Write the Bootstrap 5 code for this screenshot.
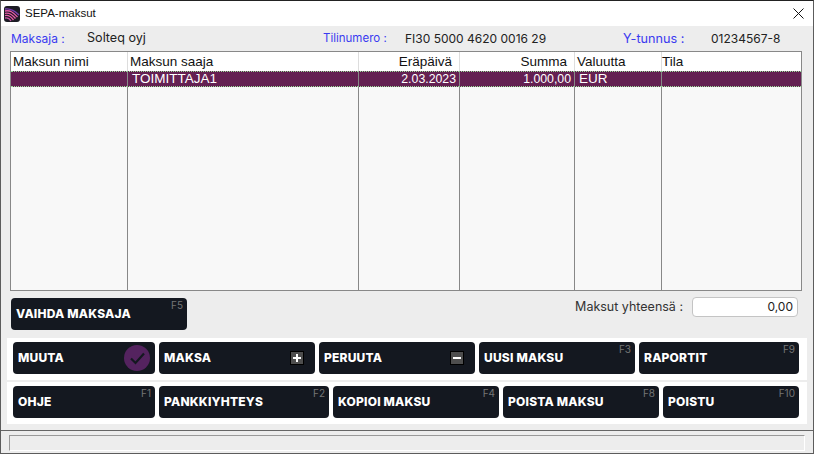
<!DOCTYPE html>
<html lang="fi"><head><meta charset="utf-8"><title>SEPA-maksut</title>
<link href="https://cdn.jsdelivr.net/npm/bootstrap@5.3.0/dist/css/bootstrap.min.css" rel="stylesheet">
<style>
html,body{margin:0;height:454px;overflow:hidden;background:#ededed}
body{font-family:Inter,"Open Sans",sans-serif;font-size:12px;color:#222}
.win{width:814px;height:454px;border:1px solid #5c5c5c;border-top-color:#222;background:#ededed}
.titlebar{height:25px;background:#fff;padding-left:3px;gap:5px;color:#111;font-family:"Liberation Sans",sans-serif}
.titlebar .ttl{font-size:11.500px}
.closex{margin-left:auto;margin-right:9px;line-height:0}
.infoline{height:25px;padding:0 0 0 10px;white-space:nowrap}
.lbl{color:#3b3bf0}
.val{color:#222}
.c1{width:76px}.c2{width:236px;font-size:12.600px}.c3{width:82px;font-size:11.500px}.c4{width:218px}.c5{width:88px;font-size:12.700px}
.grid{margin:0 11px 0 9px;height:240px;border:1px solid #888;background:#f8f8f8;font-family:"Liberation Sans",sans-serif;font-size:13.500px;display:grid;grid-template-columns:116px 231px 101px 115px 87px 1fr;grid-template-rows:19px 16px 1fr}
.hc{background:#fff;border-left:1px solid #ddd;padding:0 2px;line-height:19px;color:#111;white-space:nowrap}
.hc.first{border-left:0}
.hc.ta{padding-right:7px}
.hc.lastc{padding:0}
.rc{background:#642052;color:#fff;border-left:1px solid #888;padding:0 3px 0 4px;border-top:1px dotted #9adf9a;border-bottom:1px dotted #9adf9a;white-space:nowrap;line-height:14px}
.rc.first{border-left:0}
.rc.nums{font-size:12.300px}
.bc{border-left:1px solid #888}
.bc.first{border-left:0}
.ta{text-align:right}
.sumline{height:47px;padding:6px 15px 0 10px}
.fbtn{position:relative;flex:none;background:#141820;color:#fff;border-radius:4px;height:32px;display:flex;align-items:center;padding:0 5px;font-family:Inter,"Open Sans",sans-serif;font-weight:800;font-size:12px;letter-spacing:.2px;white-space:nowrap}
.fkey{position:absolute;right:4px;top:1px;color:#757575;font-weight:400;font-size:10px;letter-spacing:0;line-height:13px}
.strip{background:#fff;margin:0 6px;height:42px;padding:4px 6px;gap:4px}
.strip+.strip{margin-top:2px}
.vbtn{width:176px;margin-top:1px}
.w136{width:136px}.w142{width:142px}.w156{width:156px}.w160{width:160px}.w166{width:166px}.w170{width:170px}
.totbox{width:106px;height:20px;border:1px solid #c4c4c4;border-radius:4px;background:#fff;text-align:right;padding-right:4px;line-height:18px;margin-left:9px;color:#222;font-size:12px}
.sumtxt{color:#333;font-size:12.500px}
.statuswrap{margin-top:6px;border-top:1px solid #666;padding:4px 8px 0 8px}
.statusin{height:16px;border:1px solid #999;border-right-color:#fff;border-bottom-color:#fff}
.chk{position:absolute;right:5px;top:3px}
.pm{position:absolute;right:11px;top:9px;width:14px;height:14px;background:#4e4e4e;border:1px solid #000;display:flex;align-items:center;justify-content:center}
</style></head><body>
<div class="win d-flex flex-column">
 <div class="titlebar d-flex align-items-center">
  <svg width="16" height="16" viewBox="0 0 16 16"><rect width="16" height="16" rx="3" fill="#1c1c24"/><g fill="none" stroke-width="1.300"><path d="M1 3C6 2 10 4 15 9" stroke="#7a3fb0"/><path d="M1 5C6 4 9 6 13.500 11" stroke="#e85aa8"/><path d="M1 7.300C5 6.500 8 8 11.500 12.500" stroke="#e85aa8"/><path d="M1 9.600C4 9 7 10.500 9.500 14" stroke="#e85aa8"/><path d="M1 12C3.500 11.500 5.500 12.500 7 15" stroke="#c850a0"/></g></svg>
  <span class="ttl">SEPA-maksut</span>
  <svg class="closex" width="11" height="11" viewBox="0 0 11 11"><path d="M.5.500l10 10M10.500.500l-10 10" stroke="#111" fill="none"/></svg>
 </div>
 <div class="infoline d-flex align-items-center">
  <span class="lbl c1">Maksaja :</span><span class="val c2">Solteq oyj</span>
  <span class="lbl c3">Tilinumero :</span><span class="val c4">FI30 5000 4620 0016 29</span>
  <span class="lbl c5">Y-tunnus :</span><span class="val">01234567-8</span>
 </div>
 <div class="grid">
  <div class="hc first">Maksun nimi</div><div class="hc">Maksun saaja</div><div class="hc ta">Eräpäivä</div><div class="hc ta">Summa</div><div class="hc">Valuutta</div><div class="hc lastc">Tila</div>
  <div class="rc first"></div><div class="rc">TOIMITTAJA1</div><div class="rc nums ta">2.03.2023</div><div class="rc nums ta">1.000,00</div><div class="rc">EUR</div><div class="rc"></div>
  <div class="bc first"></div><div class="bc"></div><div class="bc"></div><div class="bc"></div><div class="bc"></div><div class="bc"></div>
 </div>
 <div class="sumline d-flex align-items-start">
  <div class="fbtn vbtn">VAIHDA MAKSAJA<span class="fkey">F5</span></div>
  <div class="ms-auto d-flex align-items-center"><span class="sumtxt">Maksut yhteensä :</span><div class="totbox">0,00</div></div>
 </div>
 <div class="strip d-flex">
  <div class="fbtn w142">MUUTA<svg class="chk" width="26" height="26" viewBox="0 0 26 26"><circle cx="13" cy="13" r="13" fill="#54235f"/><path d="M7 13.500l4.500 4.500L20 8.500" stroke="#141820" stroke-width="2.200" fill="none"/></svg></div>
  <div class="fbtn w156">MAKSA<span class="pm"><svg width="8" height="8" viewBox="0 0 8 8"><path d="M4 0v8M0 4h8" stroke="#fff" stroke-width="2"/></svg></span></div>
  <div class="fbtn w156">PERUUTA<span class="pm"><svg width="8" height="8" viewBox="0 0 8 8"><path d="M0 4h8" stroke="#fff" stroke-width="2"/></svg></span></div>
  <div class="fbtn w156">UUSI MAKSU<span class="fkey">F3</span></div>
  <div class="fbtn w160">RAPORTIT<span class="fkey">F9</span></div>
 </div>
 <div class="strip d-flex">
  <div class="fbtn w142">OHJE<span class="fkey">F1</span></div>
  <div class="fbtn w170">PANKKIYHTEYS<span class="fkey">F2</span></div>
  <div class="fbtn w166">KOPIOI MAKSU<span class="fkey">F4</span></div>
  <div class="fbtn w156">POISTA MAKSU<span class="fkey">F8</span></div>
  <div class="fbtn w136">POISTU<span class="fkey">F10</span></div>
 </div>
 <div class="statuswrap"><div class="statusin"></div></div>
</div>
</body></html>
